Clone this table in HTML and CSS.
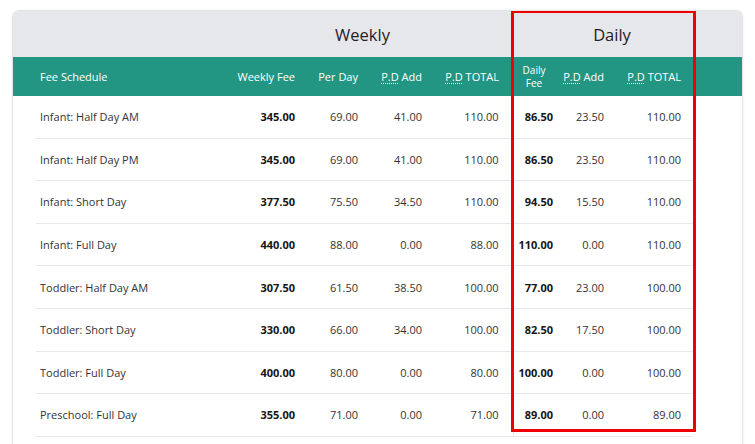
FILE: index.html
```html
<!DOCTYPE html>
<html>
<head>
<meta charset="utf-8">
<link rel="stylesheet" href="styles.css">
</head>
<body>
<div class="page">
  <div class="card">
    <table class="fees">
      <colgroup>
        <col class="c-pad">
        <col class="c-label">
        <col class="c-wfee">
        <col class="c-perday">
        <col class="c-add">
        <col class="c-total">
        <col class="c-dfee">
        <col class="c-dadd">
        <col class="c-dtotal">
        <col class="c-trail">
      </colgroup>
      <thead>
        <tr class="group-row">
          <th colspan="2"></th>
          <th colspan="4" class="group weekly">Weekly</th>
          <th colspan="3" class="group daily">Daily</th>
          <th></th>
        </tr>
        <tr class="head-row">
          <th></th>
          <th class="left">Fee Schedule</th>
          <th>Weekly Fee</th>
          <th>Per Day</th>
          <th><abbr title="Per Day">P.D</abbr> Add</th>
          <th class="pr-total"><abbr title="Per Day">P.D</abbr> TOTAL</th>
          <th class="dfee-h"><span class="stack">Daily</span><span class="stack">Fee</span></th>
          <th><abbr title="Per Day">P.D</abbr> Add</th>
          <th class="pr-dtotal"><abbr title="Per Day">P.D</abbr> TOTAL</th>
          <th></th>
        </tr>
      </thead>
      <tbody>
        <tr><td class="pad"></td><td class="label">Infant: Half Day AM</td><td class="b">345.00</td><td>69.00</td><td>41.00</td><td class="pr-total">110.00</td><td class="b dfee">86.50</td><td>23.50</td><td class="pr-dtotal">110.00</td><td class="pad"></td></tr>
        <tr><td class="pad"></td><td class="label">Infant: Half Day PM</td><td class="b">345.00</td><td>69.00</td><td>41.00</td><td class="pr-total">110.00</td><td class="b dfee">86.50</td><td>23.50</td><td class="pr-dtotal">110.00</td><td class="pad"></td></tr>
        <tr><td class="pad"></td><td class="label">Infant: Short Day</td><td class="b">377.50</td><td>75.50</td><td>34.50</td><td class="pr-total">110.00</td><td class="b dfee">94.50</td><td>15.50</td><td class="pr-dtotal">110.00</td><td class="pad"></td></tr>
        <tr><td class="pad"></td><td class="label">Infant: Full Day</td><td class="b">440.00</td><td>88.00</td><td>0.00</td><td class="pr-total">88.00</td><td class="b dfee">110.00</td><td>0.00</td><td class="pr-dtotal">110.00</td><td class="pad"></td></tr>
        <tr><td class="pad"></td><td class="label">Toddler: Half Day AM</td><td class="b">307.50</td><td>61.50</td><td>38.50</td><td class="pr-total">100.00</td><td class="b dfee">77.00</td><td>23.00</td><td class="pr-dtotal">100.00</td><td class="pad"></td></tr>
        <tr><td class="pad"></td><td class="label">Toddler: Short Day</td><td class="b">330.00</td><td>66.00</td><td>34.00</td><td class="pr-total">100.00</td><td class="b dfee">82.50</td><td>17.50</td><td class="pr-dtotal">100.00</td><td class="pad"></td></tr>
        <tr><td class="pad"></td><td class="label">Toddler: Full Day</td><td class="b">400.00</td><td>80.00</td><td>0.00</td><td class="pr-total">80.00</td><td class="b dfee">100.00</td><td>0.00</td><td class="pr-dtotal">100.00</td><td class="pad"></td></tr>
        <tr><td class="pad"></td><td class="label">Preschool: Full Day</td><td class="b">355.00</td><td>71.00</td><td>0.00</td><td class="pr-total">71.00</td><td class="b dfee">89.00</td><td>0.00</td><td class="pr-dtotal">89.00</td><td class="pad"></td></tr>
      </tbody>
    </table>
    <div class="highlight"></div>
  </div>
</div>
</body>
</html>
```

FILE: styles.css
```css
html, body {
  margin: 0;
  padding: 0;
  background: #ffffff;
}
body {
  font-family: "Open Sans", "Noto Sans", sans-serif;
  color: #2b2b2b;
}
.page {
  padding: 10px 12px 0 12px;
  width: 731px;
}
.card {
  position: relative;
  width: 731px;
  border: 1px solid #e4e4e6;
  border-bottom: none;
  border-radius: 7px 7px 0 0;
  box-sizing: border-box;
  box-shadow: 0 0 3px rgba(0,0,0,0.06);
  overflow: hidden;
  height: 440px;
}
.fees {
  border-collapse: collapse;
  table-layout: fixed;
  width: 731px;
  font-size: 11px;
}
.c-pad { width: 23px; }
.c-label { width: 194px; }
.c-wfee { width: 69px; }
.c-perday { width: 63px; }
.c-add { width: 64px; }
.c-total { width: 87px; }
.c-dfee { width: 44px; }
.c-dadd { width: 51px; }
.c-dtotal { width: 85px; }
.c-trail { width: 51px; }

.group-row th {
  background: #e6e7eb;
  height: 46px;
  padding: 0;
  font-weight: 400;
  font-size: 16.5px;
  color: #222;
}
.group.weekly { text-align: center; padding-right: 18px; }
.group.daily { text-align: center; padding-left: 18px; }

.head-row th {
  background: #239683;
  color: #ffffff;
  height: 39px;
  padding: 0 4px 0 0;
  font-weight: 400;
  font-size: 11px;
  text-align: right;
  line-height: 1.2;
}
.head-row th.left { text-align: left; padding-left: 4px; }
.head-row th.dfee-h { text-align: center; padding: 0 2px 0 0; font-size: 10px; }
.stack { display: block; line-height: 13px; }
abbr {
  text-decoration: underline dotted;
  text-underline-offset: 2px;
}
.pr-total { padding-right: 14px !important; }
.pr-dtotal { padding-right: 12px !important; }

tbody td {
  height: 41.6px;
  padding: 0 4px 0 0;
  text-align: right;
  border-bottom: 1px solid #e8e8ea;
  color: #333;
  white-space: nowrap;
}
tbody td.pad { border-bottom: none; }
tbody td.label { text-align: left; padding-left: 4px; }
tbody td.b { font-weight: 700; color: #151515; }
tbody td.dfee { border-left: 1px solid #e8e8ea; }

.highlight {
  position: absolute;
  left: 498px;
  top: -1px;
  width: 185px;
  height: 422px;
  border: 3px solid #ee0000;
  box-sizing: border-box;
  pointer-events: none;
}
```
